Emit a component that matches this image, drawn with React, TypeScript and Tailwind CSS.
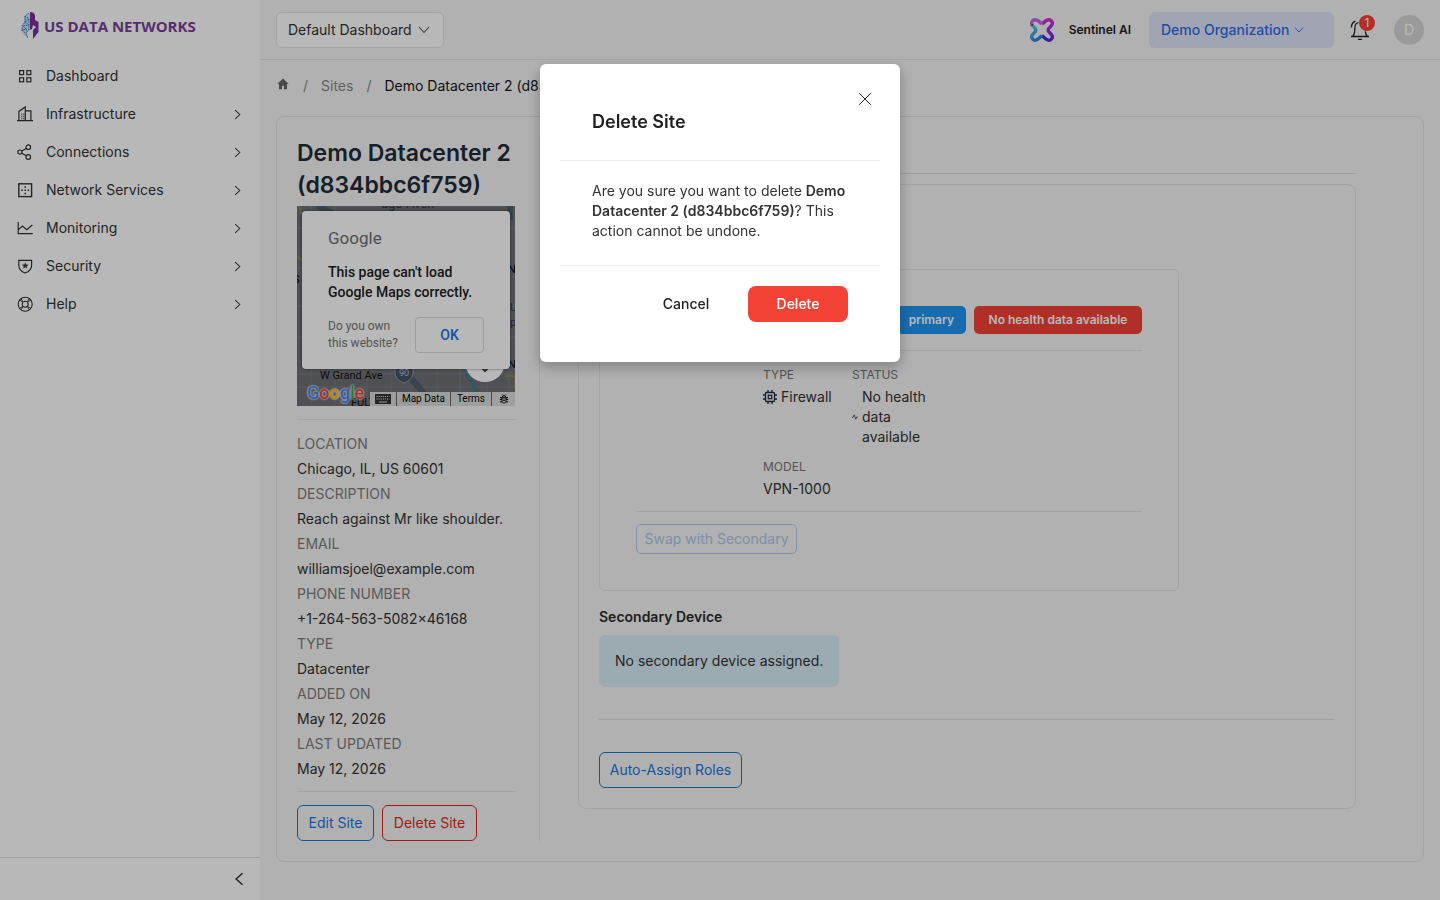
import React from "react";

type IconProps = { className?: string; children?: React.ReactNode };

function Icon({ className = "size-4", children }: IconProps) {
  return (
    <svg viewBox="0 0 16 16" fill="none" stroke="currentColor" strokeWidth="1.2" className={className} aria-hidden="true">
      {children}
    </svg>
  );
}

const DashboardIcon = () => (
  <Icon>
    <rect x="2.6" y="2.6" width="4" height="4" />
    <rect x="9.8" y="2.6" width="4" height="4" />
    <rect x="2.6" y="9.8" width="4" height="4" />
    <rect x="9.8" y="9.8" width="4" height="4" />
  </Icon>
);

const BuildingIcon = () => (
  <Icon>
    <path d="M0 14.6h16.5M1.9 14.6V5.4L8.3.9v13.700M8.3 4.8h5.600v9.800" />
    <path d="M4.300 8.200h1.100M6.300 8.200h1.100M4.300 10.400h1.100M6.300 10.400h1.100M4.300 12.600h1.100M6.300 12.600h1.100" strokeWidth="1.3" />
  </Icon>
);

const ShareIcon = () => (
  <Icon>
    <circle cx="2.9" cy="8.1" r="2.1" />
    <circle cx="11.3" cy="3.2" r="2.3" />
    <circle cx="11.3" cy="13" r="2.3" />
    <path d="M4.8 7.1l4.5-2.6M4.8 9.2l4.5 2.6" />
  </Icon>
);

const NetworkIcon = () => (
  <Icon>
    <rect x="1.8" y="1.8" width="12.8" height="12.8" strokeWidth="1.4" />
    <path d="M7.500 5h1.500M7.500 8.200h1.500M7.500 11.400h1.500M4.300 8.200h1.500M10.700 8.200h1.500" strokeWidth="1.500" />
  </Icon>
);

const ChartIcon = () => (
  <Icon>
    <path d="M1.2 2v11.6h14.6M1.4 9.6l4-3.6 4.3 3.8L15.4 5" />
  </Icon>
);

const ShieldIcon = () => (
  <Icon>
    <path d="M1.8 2.3h12.8v5.2c0 4-2.8 6.2-6.4 7.5-3.6-1.3-6.4-3.5-6.4-7.5z" />
    <path d="M8.2 4.7l.8 2.1h2.2L9.5 8.2l.6 2.2-1.9-1.3-1.9 1.3.6-2.2-1.7-1.4h2.2z" fill="currentColor" strokeWidth=".3" />
  </Icon>
);

const HelpIcon = () => (
  <Icon>
    <circle cx="8.2" cy="8.2" r="7" strokeWidth="1.1" />
    <circle cx="8.2" cy="8.2" r="3" strokeWidth="1.1" />
    <path d="M2.700 4.200l3 1.600M13.700 4.200l-3 1.600M2.700 12.200l3-1.600M13.700 12.200l-3-1.600M4.200 2.700l1.600 3M12.200 2.700l-1.600 3M4.200 13.700l1.600-3M12.200 13.700l-1.600-3" strokeWidth=".9" />
  </Icon>
);

const Chevron = ({ className, d }: { className: string; d: string }) => (
  <svg viewBox="0 0 12 12" fill="none" stroke="currentColor" strokeWidth="1.1" className={className} aria-hidden="true">
    <path d={d} />
  </svg>
);

const NAV = [
  { label: "Dashboard", icon: <DashboardIcon />, nested: false },
  { label: "Infrastructure", icon: <BuildingIcon />, nested: true },
  { label: "Connections", icon: <ShareIcon />, nested: true },
  { label: "Network Services", icon: <NetworkIcon />, nested: true },
  { label: "Monitoring", icon: <ChartIcon />, nested: true },
  { label: "Security", icon: <ShieldIcon />, nested: true },
  { label: "Help", icon: <HelpIcon />, nested: true },
];

const DETAILS = [
  ["Location", "Chicago, IL, US 60601"],
  ["Description", "Reach against Mr like shoulder."],
  ["Email", "williamsjoel@example.com"],
  ["Phone Number", "+1-264-563-5082x46168"],
  ["Type", "Datacenter"],
  ["Added On", "May 12, 2026"],
  ["Last Updated", "May 12, 2026"],
];

function BrandMark() {
  return (
    <svg viewBox="0 0 18 30" className="h-[30px] w-[18px]" aria-hidden="true">
      <path d="M9 1c3 0 5 1.5 5 4v4l3.500 2v10L12 28V19l3-3-3-2-1 4-2 1z" fill="#7b2f9e" />
      <path d="M8.500 2v17l-2 2v6L1 22v-8l2-2V6z" fill="#7aa7d8" opacity=".35" />
      <path d="M8 2L4 5l4 3-4 3 4 3-6 1 4 4-5-1 4 5 2 4M4 5v6l-3 4v6M8 8v11l-3 3" fill="none" stroke="#2a6cb8" strokeWidth=".9" strokeDasharray="1.6 .8" />
    </svg>
  );
}

function Sidebar() {
  return (
    <aside className="flex w-[260px] shrink-0 flex-col bg-white">
      <a href="#home" className="flex h-[51px] items-center gap-[5px] pl-[21px] font-['Open_Sans',sans-serif] text-[15px] font-bold text-[#7b3f98]">
        <BrandMark />
        US DATA NETWORKS
      </a>
      <nav className="mt-[6px] flex-1">
        <ul>
          {NAV.map((item) => (
            <li key={item.label}>
              <a href={"#" + item.label} className="flex h-[38px] items-center gap-[13px] px-[17px] text-[#333]">
                {item.icon}
                <span className="flex-1">{item.label}</span>
                {item.nested && <Chevron className="size-[11px]" d="M3.500 1.200L8.500 6l-5 4.800" />}
              </a>
            </li>
          ))}
        </ul>
      </nav>
      <div className="flex h-[43px] items-center justify-end border-t border-[#dedede] pr-[14px]">
        <button type="button" aria-label="Collapse sidebar" className="text-[#222]">
          <Chevron className="size-[14px]" d="M9 1L3.500 6 9 11" />
        </button>
      </div>
    </aside>
  );
}

function Header() {
  return (
    <header className="flex h-[60px] items-center justify-between border-b border-[#e4e4e4] px-4">
      <div className="relative">
        <select aria-label="Dashboard" className="h-9 w-[168px] appearance-none rounded-md border border-[#e4e4e4] bg-white pl-[11px] text-[#333]">
          <option>Default Dashboard</option>
        </select>
        <Chevron className="pointer-events-none absolute top-3 right-[14px] size-3 text-[#555]" d="M1 3l5 5.500L11 3" />
      </div>
      <div className="flex items-center">
        <svg viewBox="0 0 24 24" className="size-6" fill="none" aria-hidden="true">
          <defs>
            <linearGradient id="mark" x1="16" y1="0" x2="10" y2="24" gradientUnits="userSpaceOnUse">
              <stop offset="0" stopColor="#e52bd8" />
              <stop offset=".5" stopColor="#8a2fe8" />
              <stop offset="1" stopColor="#3a1fc0" />
            </linearGradient>
            <linearGradient id="markLeft" x1="0" y1="4" x2="12" y2="22" gradientUnits="userSpaceOnUse">
              <stop offset="0" stopColor="#6fe3ea" />
              <stop offset="1" stopColor="#1478e0" />
            </linearGradient>
          </defs>
          <path d="M12 6c2-1.500 3-3.300 5.500-4 3.500-1 6 2.300 4.200 5.200-1.200 2-3.600 3-3.600 4.800s2.700 3.200 3.800 5.200c1.500 3-1.400 6-4.600 4.600C15 20.800 14 19 12 17.600" stroke="url(#mark)" strokeWidth="3.400" />
          <path d="M12 17.600c-2 1.400-3 3.200-5.300 4.200-3.200 1.400-6-1.600-4.600-4.600 1.100-2 3.800-3.400 3.800-5.200S3.400 9.200 2.200 7.200" stroke="url(#markLeft)" strokeWidth="3.400" />
          <path d="M2.200 7.200C.5 4.400 3 1 6.500 2 9 2.700 10 4.500 12 6" stroke="#c969dc" strokeWidth="3.400" />
          <path d="M2.600 7.600L2 6.600" stroke="#1a1e55" strokeWidth="2" />
        </svg>
        <span className="ml-[15px] text-[12px] font-semibold text-[#222]">Sentinel AI</span>
        <div className="relative ml-[18px]">
          <select aria-label="Organization" className="h-9 w-[185px] appearance-none rounded-md bg-[#dfe5f8] pl-3 font-medium text-[#2d6bea]">
            <option>Demo Organization</option>
          </select>
          <Chevron className="pointer-events-none absolute top-[13px] left-[145px] size-[10px] text-[#2d6bea]" d="M1 3l5 5.500L11 3" />
        </div>
        <button type="button" aria-label="Notifications" className="relative ml-4 text-[#222]">
          <svg viewBox="0 0 20 22" fill="none" stroke="currentColor" strokeWidth="1.3" className="h-[22px] w-5" aria-hidden="true">
            <path d="M1 17.500h18M2.600 17.400c2-1.900 2.200-4 2.200-8 0-3.700 2.200-6 5.200-6s5.200 2.300 5.200 6c0 4 .4 6.100 2.200 8M8 20.300h4M1.400 8.500c0-3 1.200-5.200 4-6.300" />
          </svg>
          <span className="absolute -top-[4px] left-[9px] flex size-4 items-center justify-center rounded-full bg-[#f44336] text-[12px] leading-4 text-white ring-1 ring-white/60">1</span>
        </button>
        <span className="ml-6 flex size-[30px] items-center justify-center rounded-full bg-[#d6d6d6] text-white">D</span>
      </div>
    </header>
  );
}

function SiteMap() {
  return (
    <div className="relative mt-[5px] h-[200px] w-[218px] overflow-hidden bg-[#6d6f74] font-[Roboto,sans-serif]">
      <svg viewBox="0 0 218 200" className="absolute inset-0 size-full" fill="none" aria-hidden="true">
        <path d="M0 22h218M0 62h218M0 100h218M0 131h218M0 168h218M0 181h218M14 0v200M38 0v200M70 158v42M94 158v42M140 158v42M163 158v42M190 158v42M212 0v200" stroke="#7b7e87" />
        <path d="M2 0l8 22M0 50l12 12M208 170h10v12" stroke="#8d8360" strokeWidth="2" />
        <path d="M20 0l30 14M95 150l36 42M213 0v14" stroke="#4f5c6d" strokeWidth="6" />
        <path d="M166 158l16 34" stroke="#427d83" strokeWidth="4" />
        <path d="M98 160h18v6c0 6-4 9-9 11-5-2-9-5-9-11z" fill="#43536a" stroke="#9298a0" />
      </svg>
      <span className="absolute -top-3 left-[84px] text-[13px] text-[#35334f]">ago Aven</span>
      <span className="absolute top-[64px] -left-1 text-[11px] text-black">S</span>
      <span className="absolute top-[54px] left-[211px] text-[11px] text-black">N</span>
      <span className="absolute top-[149px] left-[211px] text-[11px] text-black">N</span>
      <span className="absolute top-[92px] left-[213px] text-[11px] text-[#35306a]">U</span>
      <span className="absolute top-[107px] left-[213px] text-[11px] text-[#35306a]">p</span>
      <span className="absolute top-[157px] left-[102px] text-[9px] text-[#b9bcc2]">90</span>
      <span className="absolute top-[162px] left-[23px] text-[11px] leading-4 text-[#111]">W Grand Ave</span>
      <span className="absolute top-[189px] left-[54px] text-[11px] leading-4 whitespace-nowrap text-[#111]">FULTON MARKET</span>
      <span className="absolute top-[136px] left-[168px] flex size-10 items-end justify-center rounded-full bg-white pb-2 text-[#444]">
        <svg viewBox="0 0 12 8" className="h-2 w-3" fill="none" stroke="currentColor" strokeWidth="2" aria-hidden="true">
          <path d="M2 1l4 4 4-4" />
        </svg>
      </span>
      <span className="absolute top-[175px] left-[10px] text-[18px] leading-6 font-medium [text-shadow:0_0_2px_#fff,0_0_2px_#fff]">
        <span className="text-[#4285f4]">G</span>
        <span className="text-[#ea4335]">o</span>
        <span className="text-[#fbbc05]">o</span>
        <span className="text-[#4285f4]">g</span>
        <span className="text-[#34a853]">l</span>
        <span className="text-[#ea4335]">e</span>
      </span>
      <div className="absolute right-0 bottom-0 flex h-[14px] items-center bg-[#e8e8e8]/90 text-[10px] leading-[14px] text-black">
        <button type="button" aria-label="Keyboard shortcuts" className="flex h-full w-[26px] items-center justify-center">
          <svg viewBox="0 0 16 10" className="h-[10px] w-4" aria-hidden="true">
            <path d="M0 0h16v10H0z" fill="#333" />
            <path d="M1.500 2.500h13M1.500 5h13" stroke="#ddd" strokeWidth="1.2" strokeDasharray="1.2 .9" />
            <path d="M4 8h8" stroke="#ddd" />
          </svg>
        </button>
        <a href="#map-data" className="border-l border-[#666] px-[5px]">Map Data</a>
        <a href="#terms" className="border-l border-[#666] px-[6px]">Terms</a>
        <a href="#report" aria-label="Report a map error" className="flex h-full w-6 items-center justify-center border-l border-[#666]">
          <svg viewBox="0 0 10 10" className="size-[10px]" fill="none" stroke="#000" aria-hidden="true">
            <path d="M3 3.200h4v4.300c0 2-4 2-4 0zM3.500 3c0-2 3-2 3 0M1 3.500h2M7 3.500h2M.8 5.500H3M7 5.500h2.200M1 7.800h2M7 7.800h2M3 .5l1 1M7 .5l-1 1M4.200 4.800h1.600M4.200 6.500h1.600" />
          </svg>
        </a>
      </div>
      <div className="absolute top-[5px] left-[5px] h-[158px] w-[208px] rounded-[4px] bg-white px-[26px] pt-[15px] shadow-[0_0_3px_rgba(0,0,0,0.5)]">
        <p className="text-[17px] leading-6 text-[#6b6e73]">Google</p>
        <p className="mt-3 text-[14px] leading-5 font-medium whitespace-nowrap text-[#212121]">
          This page can't load
          <br />
          Google Maps correctly.
        </p>
        <div className="mt-[15px] flex items-center justify-between">
          <p className="text-[12px] leading-[17px] whitespace-nowrap text-[#757575]">
            Do you own
            <br />
            this website?
          </p>
          <button type="button" className="h-9 w-[69px] rounded-[4px] border border-[#dadce0] text-[14px] font-medium text-[#1a73e8]">OK</button>
        </div>
      </div>
    </div>
  );
}

function SiteSummary() {
  return (
    <section className="w-[243px] shrink-0 border-r border-[#e4e4e4] pr-[23px]">
      <h1 className="text-[23px] leading-8 font-semibold whitespace-nowrap text-[#212b3a]">
        Demo Datacenter 2
        <br />
        (d834bbc6f759)
      </h1>
      <SiteMap />
      <hr className="mt-[13px] border-[#e4e4e4]" />
      <dl className="mt-[11px] leading-[25px]">
        {DETAILS.map(([label, value]) => (
          <div key={label}>
            <dt className="text-[#7d7d7d] uppercase">{label}</dt>
            <dd className="whitespace-nowrap text-[#333]">{value}</dd>
          </div>
        ))}
      </dl>
      <hr className="mt-[10px] border-[#e4e4e4]" />
      <div className="mt-[13px] flex gap-2">
        <button type="button" className="h-9 w-[77px] rounded-md border border-[#1976e0] text-[#1976e0]">Edit Site</button>
        <button type="button" className="h-9 w-[95px] rounded-md border border-[#dc2c22] text-[#dc2c22]">Delete Site</button>
      </div>
    </section>
  );
}

function DeviceCard() {
  return (
    <article className="w-[580px] rounded-md border border-[#e4e4e4] p-9">
      <div className="flex justify-end gap-2 border-b border-[#e4e4e4] pb-4 text-[12px] leading-7 font-semibold text-white">
        <span className="rounded-[5px] bg-[#2196f3] px-3">primary</span>
        <span className="w-[168px] rounded-[5px] bg-[#f44336] text-center">No health data available</span>
      </div>
      <dl className="ml-[127px] grid grid-cols-[63px_80px] gap-x-[26px] gap-y-[10px] pt-[14px] leading-5 text-[#333]">
        <div>
          <dt className="text-[12px] leading-5 text-[#757575]">TYPE</dt>
          <dd className="flex items-center gap-1 pt-0.5 whitespace-nowrap">
            <svg viewBox="0 0 14 14" className="size-[14px] shrink-0" fill="none" stroke="#212b3a" strokeWidth="1.3" aria-hidden="true">
              <rect x="2.5" y="2.5" width="9" height="9" rx="1" />
              <rect x="5.3" y="5.3" width="3.4" height="3.4" />
              <path d="M5 0v2.500M9 0v2.500M5 11.500V14M9 11.500V14M0 5h2.500M0 9h2.500M11.500 5H14M11.500 9H14" />
            </svg>
            Firewall
          </dd>
        </div>
        <div>
          <dt className="text-[12px] leading-5 text-[#757575]">STATUS</dt>
          <dd className="flex items-center gap-1 pt-0.5">
            <svg viewBox="0 0 6 6" className="size-[6px] shrink-0" fill="none" stroke="#444" strokeWidth=".8" aria-hidden="true">
              <path d="M0 3.400h1L2.200.8l1.500 4.400L4.700 3H6" />
            </svg>
            No health data available
          </dd>
        </div>
        <div>
          <dt className="text-[12px] leading-5 text-[#757575]">MODEL</dt>
          <dd className="pt-0.5 whitespace-nowrap">VPN-1000</dd>
        </div>
      </dl>
      <div className="mt-3 border-t border-[#e4e4e4] pt-3">
        <button type="button" disabled className="h-[30px] w-[161px] rounded-[5px] border border-[#adcdf2] text-[#adc8e8]">Swap with Secondary</button>
      </div>
    </article>
  );
}

function DeleteDialog() {
  return (
    <div className="fixed inset-0 z-10 flex items-start justify-center bg-black/[0.28] pt-16">
      <div role="dialog" aria-modal="true" aria-labelledby="dialog-title" className="relative w-[360px] rounded-md bg-white px-5 py-10 shadow-[0_5px_14px_rgba(0,0,0,0.28)]">
        <button type="button" aria-label="Close" className="absolute top-[29px] right-[29px] text-[#222]">
          <svg viewBox="0 0 12 12" className="size-3" fill="none" stroke="currentColor" aria-hidden="true">
            <path d="M.2.2l11.600 11.600M11.800.2L.2 11.800" />
          </svg>
        </button>
        <h2 id="dialog-title" className="px-8 pt-1 pb-6 text-[18px] leading-7 font-semibold text-[#212121]">Delete Site</h2>
        <p className="border-y border-[#ececec] px-8 pt-5 pb-6 leading-5 text-[#333]">
          Are you sure you want to delete <strong className="font-semibold">Demo Datacenter 2 (d834bbc6f759)</strong>? This action cannot be undone.
        </p>
        <div className="flex justify-end gap-3 px-8 pt-5 font-medium">
          <button type="button" className="h-9 w-[100px] rounded-md text-[#222]">Cancel</button>
          <button type="button" className="h-9 w-[100px] rounded-lg bg-[#f44336] text-white">Delete</button>
        </div>
      </div>
    </div>
  );
}

export default function App() {
  return (
    <div className="flex min-h-screen bg-[#f5f5f5] font-[Inter,sans-serif] text-[14px] leading-5">
      <Sidebar />
      <div className="min-w-0 flex-1">
        <Header />
        <main className="px-4 pt-4">
          <nav aria-label="Breadcrumb" className="flex h-5 items-center text-[#888]">
            <a href="#home" aria-label="Home" className="mb-1 text-[#666]">
              <svg viewBox="0 0 14 14" className="size-[14px]" fill="currentColor" aria-hidden="true">
                <path d="M7 1.500L1.300 7H3v5.300h3V8.700h2v3.600h3V7h1.700z" />
              </svg>
            </a>
            <span className="mx-[13px]">/</span>
            <a href="#sites">Sites</a>
            <span className="mx-[13px]">/</span>
            <span className="text-[#151515]">Demo Datacenter 2 (d834bbc6f759)</span>
          </nav>
          <div className="mt-5 flex rounded-lg border border-[#e4e4e4] p-5">
            <SiteSummary />
            <section className="min-w-0 flex-1 pr-[47px] pl-[38px]">
              <div className="h-[37px] border-b border-[#d9d9d9]" />
              <div className="mt-[10px] rounded-lg border border-[#e4e4e4] px-5 pt-16 pb-5">
                <div className="mt-5">
                  <DeviceCard />
                </div>
                <h3 className="mt-4 font-semibold text-[#2b2b2b]">Secondary Device</h3>
                <p className="mt-2 w-fit rounded-md bg-[#d9edf7] p-4 text-[#333]">No secondary device assigned.</p>
                <div className="mt-8 border-t border-[#dedede] pt-8">
                  <button type="button" className="h-9 w-[143px] rounded-md border border-[#1976e0] text-[#1976e0]">Auto-Assign Roles</button>
                </div>
              </div>
            </section>
          </div>
        </main>
      </div>
      <DeleteDialog />
    </div>
  );
}
